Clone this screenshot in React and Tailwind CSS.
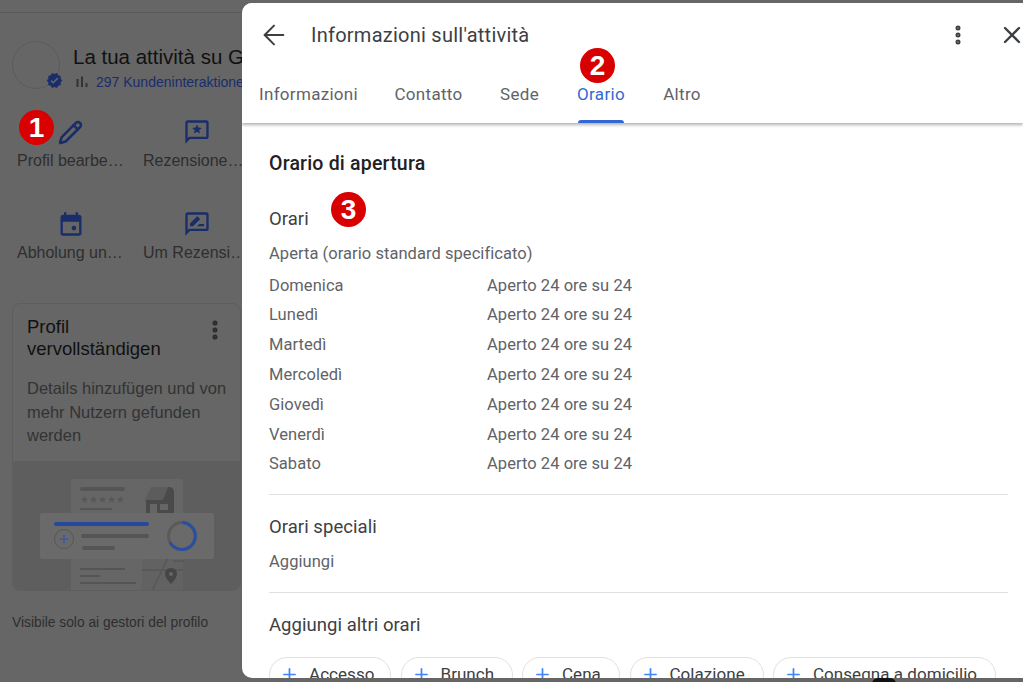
import React from "react";
import { ArrowLeft, X, MoreVertical, Plus, Pencil } from "lucide-react";

const hours = ["Domenica", "Lunedì", "Martedì", "Mercoledì", "Giovedì", "Venerdì", "Sabato"];
const tabs = [
  { label: "Informazioni", width: "w-[97px]" },
  { label: "Contatto", width: "w-[69px]" },
  { label: "Sede", width: "w-[39px]" },
  { label: "Orario", width: "w-[50px]" },
  { label: "Altro", width: "w-[38px]" },
];
const chips = [
  { label: "Accesso", width: "w-[122px]" },
  { label: "Brunch", width: "w-[112px]" },
  { label: "Cena", width: "w-[98px]" },
  { label: "Colazione", width: "w-[134px]" },
  { label: "Consegna a domicilio", width: "w-[223px]" },
];

const Badge = ({ n, className }) => (
  <div className={`absolute z-10 w-[35px] h-[35px] rounded-full bg-[#d90000] text-white flex items-center justify-center text-[28px] font-bold font-['Liberation_Sans',sans-serif] ${className}`}>
    {n}
  </div>
);

const ReviewIcon = () => (
  <svg width="28" height="28" viewBox="0 0 24 24" fill="#1a2d6b">
    <path d="M20 2H4c-1.1 0-2 .9-2 2v18l4-4h14c1.1 0 2-.9 2-2V4c0-1.1-.9-2-2-2zm0 14H5.2L4 17.2V4h16v12z" />
    <path d="M12 5.5l1.2 2.7 2.9.3-2.2 1.9.7 2.8-2.6-1.5-2.6 1.5.7-2.800-2.200-1.900 2.900-.3z" />
  </svg>
);

const AskReviewIcon = () => (
  <svg width="28" height="28" viewBox="0 0 24 24" fill="#1a2d6b">
    <path d="M20 2H4c-1.1 0-2 .9-2 2v18l4-4h14c1.1 0 2-.9 2-2V4c0-1.1-.9-2-2-2zm0 14H5.2L4 17.2V4h16v12z" />
    <path d="M6 14v-2.5l5.9-5.9c.2-.2.5-.2.7 0l1.8 1.800c.2.2.2.5 0 .7L8.500 14H6zm6 0l2-2h4v2h-6z" />
  </svg>
);

const CalendarIcon = () => (
  <svg width="28" height="28" viewBox="0 0 24 24" fill="#1a2d6b">
    <path d="M19 4h-1V2h-2v2H8V2H6v2H5c-1.100 0-2 .9-2 2v14c0 1.100.9 2 2 2h14c1.100 0 2-.9 2-2V6c0-1.100-.9-2-2-2zm0 16H5V10h14v10z" />
    <circle cx="14.500" cy="15.500" r="2" />
  </svg>
);

const VerifiedIcon = () => (
  <svg width="17" height="17" viewBox="0 0 24 24">
    <path fill="#1a2d6b" d="M23 12l-2.440-2.790.34-3.690-3.610-.82-1.890-3.200L12 2.960 8.600 1.500 6.710 4.690 3.100 5.500l.34 3.700L1 12l2.440 2.790-.34 3.700 3.610.82L8.600 22.500l3.400-1.470 3.400 1.460 1.890-3.190 3.610-.82-.34-3.690L23 12z" />
    <path fill="#666666" d="M10.090 16.720l-3.800-3.810 1.480-1.480 2.320 2.330 5.850-5.870 1.480 1.480z" />
  </svg>
);

const StatsIcon = () => (
  <svg width="14" height="12" viewBox="0 0 14 12" fill="#333333">
    <rect x="1.500" y="3" width="2" height="8" />
    <rect x="6" y="0.500" width="2" height="10.500" />
    <rect x="10.500" y="7" width="2" height="4" />
  </svg>
);

const Illustration = () => (
  <svg width="228" height="130" viewBox="0 0 228 130" className="block">
    <rect x="58" y="18" width="112" height="112" rx="2" fill="#666666" />
    <rect x="67" y="26" width="45" height="4" rx="2" fill="#555555" />
    <text x="67" y="42" fontSize="10" fill="#575757" fontFamily="'DejaVu Sans', sans-serif">★★★★★</text>
    <rect x="67" y="47" width="32" height="2" fill="#555555" />
    <path d="M140 26h16c3 0 5 2 5 5v21h-28V40h-1z" fill="#4a4a4a" />
    <path d="M138 26h17l-5 13h-18z" fill="#5c5c5c" />
    <rect x="137" y="43" width="7" height="9" fill="#666666" />
    <rect x="147" y="43" width="8" height="6" fill="#666666" />
    <path d="M129 98h41v32h-41z" fill="#626262" />
    <path d="M129 109h41M139 130l24-50M160 100h11" stroke="#575757" strokeWidth="1.500" />
    <path d="M158 107c-4 0-6 3-6 6 0 4 6 10 6 10s6-6 6-10c0-3-2-6-6-6z" fill="#464646" />
    <circle cx="158" cy="113" r="2" fill="#666666" />
    <rect x="67" y="107" width="45" height="2" fill="#555555" />
    <rect x="67" y="114" width="20" height="2" fill="#555555" />
    <rect x="67" y="121" width="56" height="2" fill="#555555" />
    <rect x="27" y="52" width="174" height="46" rx="2" fill="#6a6a6a" />
    <rect x="41" y="61" width="95" height="4" rx="2" fill="#234a9c" />
    <circle cx="51" cy="78" r="9.500" fill="none" stroke="#565656" />
    <path d="M51 73.500v9M46.500 78h9" stroke="#2f55a8" strokeWidth="1.200" />
    <rect x="68" y="73" width="68" height="4" rx="2" fill="#555555" />
    <rect x="69" y="85" width="33" height="4" rx="2" fill="#555555" />
    <circle cx="169" cy="75" r="13.500" fill="none" stroke="#5a5a5a" strokeWidth="3" />
    <path d="M169 61.500a13.500 13.500 0 1 1-12 20" fill="none" stroke="#2a4f9f" strokeWidth="3" />
  </svg>
);

const actions = [
  { label: "Profil bearbeiten", icon: <Pencil size={25} color="#1a2d6b" strokeWidth={2.500} /> },
  { label: "Rezensionen lesen", icon: <ReviewIcon /> },
  { label: "Abholung und Lieferung", icon: <CalendarIcon /> },
  { label: "Um Rezensionen bitten", icon: <AskReviewIcon /> },
];

const BusinessPanel = () => (
  <div className="w-[242px] shrink-0 h-full overflow-hidden font-['Liberation_Sans',sans-serif]">
    <div className="mt-3 border-t border-[#5a5a5a] pt-7 pl-3 flex w-[400px]">
      <div className="relative w-12 h-12 rounded-full border border-[#5c5c5c] shrink-0">
        <div className="absolute -right-[4px] -bottom-[1px]">
          <VerifiedIcon />
        </div>
      </div>
      <div className="ml-[13px]">
        <div className="text-[20.500px] leading-[26px] text-[#111111] mt-[3px] whitespace-nowrap">La tua attività su Google</div>
        <div className="flex items-center gap-[7px] pl-[2px] text-[14px] leading-[18px] mt-[3px] text-[#1a2d6b] whitespace-nowrap">
          <StatsIcon />
          297 Kundeninteraktionen
        </div>
      </div>
    </div>
    <div className="grid grid-cols-[126px_116px] pl-[17px] mt-[27px] gap-y-[39px] w-[259px]">
      {actions.map((a) => (
        <div key={a.label} className="flex flex-col w-[107px]">
          <div className="h-7 flex items-center justify-center">{a.icon}</div>
          <div className="mt-[5px] text-[16px] leading-[20px] text-[#2e2e2e] truncate">{a.label}</div>
        </div>
      ))}
    </div>
    <div className="ml-3 mt-[40px] w-[229px] h-[288px] rounded-lg border border-[#5e5e5e] overflow-hidden flex flex-col">
      <div className="flex justify-between pl-[14px] pr-[13px] pt-[12px]">
        <div className="text-[18.500px] leading-[22px] text-[#111111] w-[150px]">Profil vervollständigen</div>
        <MoreVertical size={24} color="#2b2b2b" strokeWidth={3} className="mt-[2px]" />
      </div>
      <div className="pl-[14px] pr-2 mt-[17px] text-[16.500px] leading-[23.500px] text-[#333333] h-[84px]">
        Details hinzufügen und von mehr Nutzern gefunden werden
      </div>
      <div className="flex-1 bg-[#5e5e5e] overflow-hidden">
        <Illustration />
      </div>
    </div>
    <div className="pl-3 mt-[23px] text-[13.800px] leading-[18px] text-[#2e2e2e] whitespace-nowrap">Visibile solo ai gestori del profilo</div>
  </div>
);

const InfoModal = () => (
  <div className="flex-1 min-w-0 mt-[3px] mb-[4px] bg-white rounded-l-[10px] overflow-hidden flex flex-col font-['Roboto',sans-serif]">
    <div className="relative shrink-0 h-[120px] shadow-[0_2px_3px_rgba(0,0,0,0.3)] z-[1] bg-white">
      <div className="flex items-center h-[64px] pl-[16px]">
        <ArrowLeft size={32} color="#3c4043" strokeWidth={1.500} />
        <div className="ml-[21px] text-[20px] text-[#3c4043] tracking-[0.25px] whitespace-nowrap">Informazioni sull'attività</div>
        <MoreVertical size={24} color="#3c4043" strokeWidth={3} className="ml-auto" />
        <X size={28} color="#3c4043" strokeWidth={2} className="ml-[28px] -mr-[3px] shrink-0" />
      </div>
      <div className="flex gap-[37px] pl-[18px]">
        {tabs.map((t) => (
          <div key={t.label} className={`relative ${t.width} h-[56px] pt-[15px] flex justify-center text-[17px] leading-[24px] font-normal tracking-[0.3px] whitespace-nowrap ${t.label === "Orario" ? "text-[#3367d6]" : "text-[#5f6368]"}`}>
            {t.label}
            {t.label === "Orario" && <div className="absolute left-[2px] right-[2px] bottom-0 h-[3px] rounded-t-[3px] bg-[#3367d6]" />}
          </div>
        ))}
      </div>
    </div>
    <div className="flex-1 min-h-0 overflow-hidden pl-[27px] pr-[15px] pt-[29px]">
      <div className="text-[19.500px] leading-[24px] font-medium tracking-[0.2px] text-[#202124]">Orario di apertura</div>
      <div className="mt-[31px] text-[18.500px] leading-[24px] tracking-[0.05px] text-[#3c4043]">Orari</div>
      <div className="mt-[13px] text-[16.500px] leading-[20px] tracking-[0.05px] text-[#5f6368]">Aperta (orario standard specificato)</div>
      <div className="mt-[7px] flex flex-col text-[16.500px] tracking-[0.05px] text-[#5f6368]">
        {hours.map((d) => (
          <div key={d} className="flex h-[29.800px] items-center">
            <div className="w-[218px]">{d}</div>
            <div>Aperto 24 ore su 24</div>
          </div>
        ))}
      </div>
      <div className="mt-[14px] border-t border-[#e0e0e0]" />
      <div className="mt-[20px] text-[18.500px] leading-[24px] tracking-[0.05px] text-[#3c4043]">Orari speciali</div>
      <div className="mt-[13px] text-[16.500px] leading-[20px] tracking-[0.05px] text-[#5f6368]">Aggiungi</div>
      <div className="mt-[20px] border-t border-[#e0e0e0]" />
      <div className="mt-[20px] text-[18.500px] leading-[24px] tracking-[0.05px] text-[#3c4043]">Aggiungi altri orari</div>
      <div className="mt-[20px] flex gap-[9.500px] whitespace-nowrap">
        {chips.map((c) => (
          <div key={c.label} className={`${c.width} shrink-0 h-[36px] rounded-[18px] border border-[#e0e0e0] flex items-center pl-[10px] text-[17px] tracking-[0.05px] text-[#3c4043]`}>
            <Plus size={19} color="#4285f4" strokeWidth={2.200} />
            <span className="ml-[10px]">{c.label}</span>
          </div>
        ))}
      </div>
    </div>
  </div>
);

export default function App() {
  return (
    <div className="relative w-[1023px] h-[682px] overflow-hidden bg-[#666666] flex">
      <BusinessPanel />
      <InfoModal />
      <Badge n="1" className="left-[19px] top-[110px]" />
      <Badge n="2" className="left-[580px] top-[48px]" />
      <Badge n="3" className="left-[331px] top-[192px]" />
      <div className="absolute left-[872px] top-[678px] w-[24px] h-[12px] rounded-full bg-[#111111]" />
    </div>
  );
}
